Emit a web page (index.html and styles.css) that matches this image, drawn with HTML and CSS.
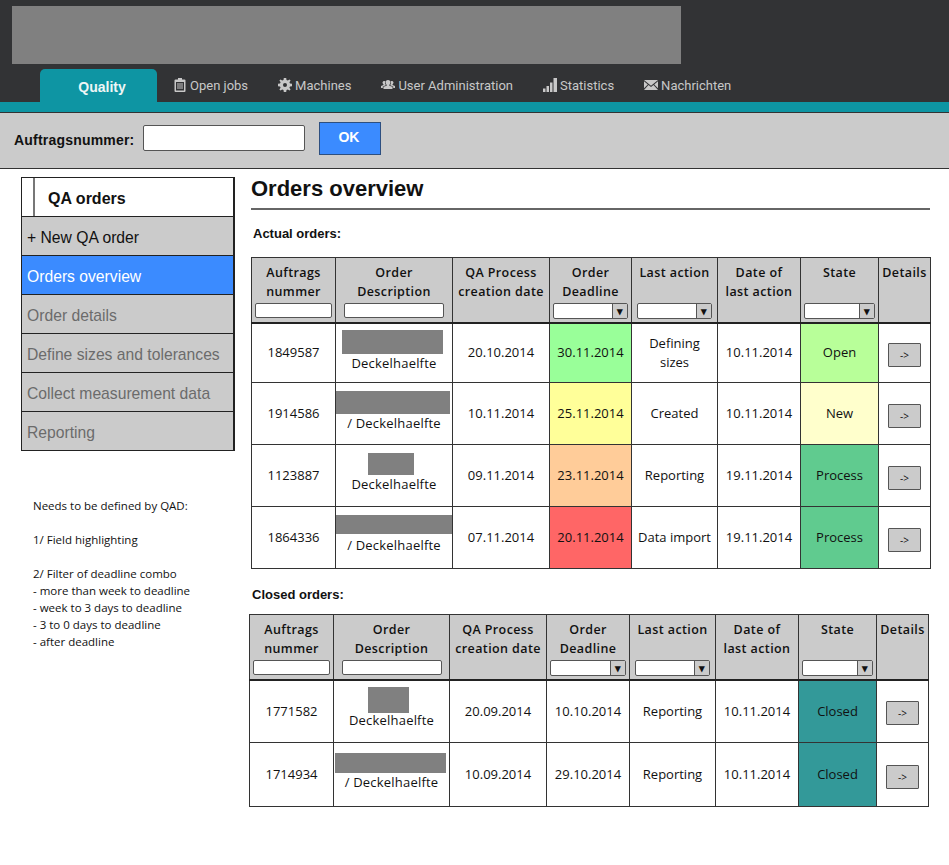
FILE: index.html
```html
<!DOCTYPE html>
<html lang="en">
<head>
    <meta charset="UTF-8">
    <meta name="viewport" content="width=device-width, initial-scale=1.0">
    <title>Orders overview</title>
    <link rel="stylesheet" href="styles.css">
</head>
<body>
    <header class="topbar">
        <div class="logo"></div>
        <nav class="nav">
            <a class="tab">Quality</a>
            <a class="nav-item">
                <svg class="icon" viewBox="0 0 14 14"><path fill-rule="evenodd" d="M5 0h4v1.500h2.500a1 1 0 0 1 1 1V13a1 1 0 0 1-1 1h-9a1 1 0 0 1-1-1V2.500a1 1 0 0 1 1-1H5zM3 4v8.500h8V4zM4 5.500h6v1H4zM4 7.500h6v1H4zM4 9.500h6v1H4z"/></svg>
                Open jobs
            </a>
            <a class="nav-item">
                <svg class="icon" viewBox="0 0 14 14"><path fill-rule="evenodd" d="M5.800 0h2.400l.3 2 1.300.6L11.500 1.400l1.100 1.100-1.200 1.700.6 1.300 2 .3v2.400l-2 .3-.6 1.300 1.200 1.700-1.100 1.100-1.700-1.200-1.300.6-.3 2H5.800l-.3-2-1.300-.6-1.700 1.200-1.100-1.100 1.200-1.700-.6-1.300-2-.3V5.800l2-.3.6-1.300-1.200-1.700 1.100-1.100 1.700 1.200 1.300-.6zM7 5a2 2 0 1 0 0 4 2 2 0 0 0 0-4z"/></svg>
                Machines
            </a>
            <a class="nav-item">
                <svg class="icon" viewBox="0 0 14 14"><path d="M7 2a2.400 2.400 0 0 1 2.400 2.500c0 1-.5 1.900-1.100 2.300v.9l3.200 1.100V11H2.500V8.800l3.200-1.100v-.9c-.6-.4-1.100-1.300-1.100-2.300A2.400 2.400 0 0 1 7 2zM3.300 3a1.900 1.900 0 0 1 1 .3 3.200 3.200 0 0 0 .5 3.600v.4L1.800 8.400V10H0V8l2.500-.9v-.7C2 6 1.500 5.300 1.500 4.600 1.500 3.700 2.300 3 3.300 3zM10.700 3c1 0 1.800.7 1.800 1.600 0 .7-.5 1.400-1 1.800v.7L14 8v2h-1.800V8.400l-3-1.100v-.4a3.200 3.200 0 0 0 .5-3.600 1.900 1.900 0 0 1 1-.3z"/></svg>
                User Administration
            </a>
            <a class="nav-item">
                <svg class="icon" viewBox="0 0 14 14"><path d="M0 10.500h2.500V14H0zM3.500 8H6v6H3.500zM7 4.500h2.500V14H7zM10.500 0H14v14h-3.500z"/></svg>
                Statistics
            </a>
            <a class="nav-item">
                <svg class="icon" viewBox="0 0 14 14"><path d="M0 2h14L7 7.800zM0 3.200l3.800 3.200L0 10.300zM14 3.200v7.100l-3.800-3.900zM4.500 7 7 9l2.500-2L14 12H0z"/></svg>
                Nachrichten
            </a>
        </nav>
    </header>
    <div class="stripe"></div>

    <form class="searchbar">
        <label class="search-label" for="orderNo">Auftragsnummer:</label>
        <input class="search-input" type="text" id="orderNo">
        <button class="ok-btn" type="button">OK</button>
    </form>

    <div class="main">
        <aside class="side">
            <div class="menu">
                <div class="menu-title"><span class="menu-title-text">QA orders</span></div>
                <a class="menu-item">+ New QA order</a>
                <a class="menu-item active">Orders overview</a>
                <a class="menu-item off">Order details</a>
                <a class="menu-item off">Define sizes and tolerances</a>
                <a class="menu-item off">Collect measurement data</a>
                <a class="menu-item off">Reporting</a>
            </div>
            <div class="notes">
                <p>Needs to be defined by QAD:</p>
                <p>1/ Field highlighting</p>
                <p>2/ Filter of deadline combo<br>- more than week to deadline<br>- week to 3 days to deadline<br>- 3 to 0 days to deadline<br>- after deadline</p>
            </div>
        </aside>

        <section class="content">
            <h1 class="page-title">Orders overview</h1>

            <h2 class="table-title">Actual orders:</h2>
            <table class="orders">
                <thead>
                    <tr>
                        <th class="c-no"><div class="th-label">Auftrags<br>nummer</div><input class="filter" type="text"></th>
                        <th class="c-desc"><div class="th-label">Order<br>Description</div><input class="filter filter-desc" type="text"></th>
                        <th class="c-created"><div class="th-label">QA Process<br>creation date</div></th>
                        <th class="c-deadline"><div class="th-label">Order<br>Deadline</div><div class="combo"><span class="combo-arrow">▾</span></div></th>
                        <th class="c-action"><div class="th-label">Last action</div><div class="combo combo-action"><span class="combo-arrow">▾</span></div></th>
                        <th class="c-date"><div class="th-label">Date of<br>last action</div></th>
                        <th class="c-state"><div class="th-label">State</div><div class="combo"><span class="combo-arrow">▾</span></div></th>
                        <th class="c-details"><div class="th-label">Details</div></th>
                    </tr>
                </thead>
                <tbody>
                    <tr class="row-a">
                        <td>1849587</td>
                        <td class="desc"><div class="redact r-101"></div>Deckelhaelfte</td>
                        <td>20.10.2014</td>
                        <td class="bg-green">30.11.2014</td>
                        <td>Defining<br>sizes</td>
                        <td>10.11.2014</td>
                        <td class="bg-open">Open</td>
                        <td><button class="go" type="button">-&gt;</button></td>
                    </tr>
                    <tr class="row-b">
                        <td>1914586</td>
                        <td class="desc"><div class="redact r-114"></div>/ Deckelhaelfte</td>
                        <td>10.11.2014</td>
                        <td class="bg-yellow">25.11.2014</td>
                        <td>Created</td>
                        <td>10.11.2014</td>
                        <td class="bg-new">New</td>
                        <td><button class="go" type="button">-&gt;</button></td>
                    </tr>
                    <tr class="row-b">
                        <td>1123887</td>
                        <td class="desc"><div class="redact r-46"></div>Deckelhaelfte</td>
                        <td>09.11.2014</td>
                        <td class="bg-orange">23.11.2014</td>
                        <td>Reporting</td>
                        <td>19.11.2014</td>
                        <td class="bg-process">Process</td>
                        <td><button class="go" type="button">-&gt;</button></td>
                    </tr>
                    <tr class="row-b">
                        <td>1864336</td>
                        <td class="desc"><div class="redact r-116"></div>/ Deckelhaelfte</td>
                        <td>07.11.2014</td>
                        <td class="bg-red">20.11.2014</td>
                        <td>Data import</td>
                        <td>19.11.2014</td>
                        <td class="bg-process">Process</td>
                        <td><button class="go" type="button">-&gt;</button></td>
                    </tr>
                </tbody>
            </table>

            <h2 class="table-title closed-title">Closed orders:</h2>
            <table class="orders closed">
                <thead>
                    <tr>
                        <th class="c-no"><div class="th-label">Auftrags<br>nummer</div><input class="filter" type="text"></th>
                        <th class="c-desc"><div class="th-label">Order<br>Description</div><input class="filter filter-desc" type="text"></th>
                        <th class="c-created"><div class="th-label">QA Process<br>creation date</div></th>
                        <th class="c-deadline"><div class="th-label">Order<br>Deadline</div><div class="combo"><span class="combo-arrow">▾</span></div></th>
                        <th class="c-action"><div class="th-label">Last action</div><div class="combo combo-action"><span class="combo-arrow">▾</span></div></th>
                        <th class="c-date"><div class="th-label">Date of<br>last action</div></th>
                        <th class="c-state"><div class="th-label">State</div><div class="combo"><span class="combo-arrow">▾</span></div></th>
                        <th class="c-details"><div class="th-label">Details</div></th>
                    </tr>
                </thead>
                <tbody>
                    <tr class="row-c">
                        <td>1771582</td>
                        <td class="desc"><div class="redact r-41"></div>Deckelhaelfte</td>
                        <td>20.09.2014</td>
                        <td>10.10.2014</td>
                        <td>Reporting</td>
                        <td>10.11.2014</td>
                        <td class="bg-closed">Closed</td>
                        <td><button class="go" type="button">-&gt;</button></td>
                    </tr>
                    <tr class="row-d">
                        <td>1714934</td>
                        <td class="desc"><div class="redact r-111"></div>/ Deckelhaelfte</td>
                        <td>10.09.2014</td>
                        <td>29.10.2014</td>
                        <td>Reporting</td>
                        <td>10.11.2014</td>
                        <td class="bg-closed">Closed</td>
                        <td><button class="go" type="button">-&gt;</button></td>
                    </tr>
                </tbody>
            </table>
        </section>
    </div>
</body>
</html>
```

FILE: styles.css
```css
* {
    box-sizing: border-box;
}
body {
    margin: 0;
    background-color: white;
    color: #111;
    font-family: "Liberation Sans", Arial, sans-serif;
}

/* header */
.topbar {
    background-color: #323335;
    padding-top: 6px;
    height: 102px;
}
.logo {
    background-color: #808080;
    margin-left: 12px;
    width: 669px;
    height: 58px;
}
.nav {
    display: flex;
    align-items: center;
    gap: 30px;
    margin-top: 5px;
    padding-left: 40px;
    height: 33px;
    font-family: Roboto, sans-serif;
    font-size: 13px;
    color: #c8c8c8;
}
.tab {
    align-self: stretch;
    display: flex;
    align-items: center;
    justify-content: center;
    width: 117px;
    margin-right: -14px;
    padding: 3px 0 0 7px;
    background-color: #0e95a3;
    border-radius: 5px 5px 0 0;
    font-family: "Liberation Sans", sans-serif;
    font-size: 14px;
    font-weight: bold;
    color: #eef6f6;
}
.nav-item {
    display: flex;
    align-items: center;
    gap: 3px;
    padding-bottom: 1px;
}
.icon {
    width: 14px;
    height: 14px;
    fill: #c8c8c8;
}
.stripe {
    height: 10px;
    background-color: #0e95a3;
}

/* search bar */
.searchbar {
    display: flex;
    align-items: center;
    height: 57px;
    padding: 0 0 5px 14px;
    background-color: #cbcbcb;
    border-top: 1px solid #333;
    border-bottom: 1px solid #333;
}
.search-label {
    font-size: 14px;
    font-weight: bold;
    letter-spacing: 0.2px;
    color: #111;
    margin-top: 3px;
}
.search-input {
    width: 162px;
    height: 26px;
    margin-left: 9px;
    background-color: white;
    border: 1px solid #555;
    border-radius: 2px;
}
.ok-btn {
    width: 62px;
    height: 33px;
    margin-left: 14px;
    padding: 0 3px 2px 0;
    background-color: #3b8bff;
    border: 1px solid #2d4f80;
    color: white;
    font-family: "Liberation Sans", sans-serif;
    font-size: 14px;
    font-weight: bold;
}

/* layout */
.main {
    display: flex;
    align-items: flex-start;
    padding: 8px 0 0 21px;
}
.side {
    width: 214px;
}
.content {
    width: 679px;
    margin-left: 16px;
}

/* left menu */
.menu {
    border: 1px solid #222;
    border-right-width: 2px;
}
.menu-title {
    height: 38px;
    margin-left: 11px;
    padding: 12px 0 0 13px;
    border-left: 2px solid #777;
    font-size: 16px;
    font-weight: bold;
}
.menu-item {
    display: flex;
    align-items: center;
    height: 39px;
    padding: 3px 0 0 5px;
    background-color: #cbcbcb;
    border-top: 1px solid #222;
    font-size: 15.700px;
    color: #111;
}
.menu-item.active {
    background-color: #3b8bff;
    color: white;
}
.menu-item.off {
    color: #6b6b6b;
}
.notes {
    margin: 46px 0 0 12px;
    font-family: "Open Sans", sans-serif;
    font-size: 11.500px;
    line-height: 17px;
    color: #111;
}
.notes p {
    margin: 0 0 17px;
}

/* titles */
.page-title {
    margin: 0;
    height: 33px;
    border-bottom: 2px solid #666;
    font-size: 22px;
    line-height: 24px;
    font-weight: bold;
    color: #111;
}
.table-title {
    margin: 14px 0 14px 2px;
    font-size: 13px;
    line-height: 19px;
    font-weight: bold;
}
.closed-title {
    margin: 16px 0 10px 1px;
}

/* tables */
.orders {
    width: 679px;
    table-layout: fixed;
    border-collapse: collapse;
    border: 1px solid #222;
    font-family: "Open Sans", sans-serif;
    font-size: 13px;
    line-height: 19px;
    color: #111;
}
.closed {
    margin-left: -2px;
}
.orders th {
    height: 65px;
    padding: 5px 3px 0;
    vertical-align: top;
    background-color: #cbcbcb;
    border: 1px solid #333;
    border-bottom: 2px solid #222;
    font-size: 12.500px;
    font-weight: 600;
    letter-spacing: 0.4px;
}
.orders td {
    padding: 0;
    text-align: center;
    vertical-align: middle;
    border: 1px solid #333;
}
.orders td.desc {
    vertical-align: top;
    line-height: 18px;
    letter-spacing: 0.2px;
}
.c-no { width: 84px; }
.c-desc { width: 117px; }
.c-created { width: 97px; }
.c-deadline { width: 82px; }
.c-action { width: 86px; }
.c-date { width: 83px; }
.c-state { width: 78px; }
.c-details { width: 52px; }
.closed .c-desc { width: 116px; }
.closed .c-deadline { width: 83px; }
.row-a { height: 60px; }
.row-b { height: 62px; }
.row-c { height: 63px; }
.row-d { height: 64px; }

.th-label {
    height: 38px;
    line-height: 19px;
    margin-bottom: 2px;
    white-space: nowrap;
}
.filter {
    display: block;
    width: 100%;
    height: 15px;
    padding: 0;
    background-color: white;
    border: 1px solid #555;
    border-radius: 2px;
}
.filter-desc {
    width: 100px;
    margin: 0 auto;
}
.combo {
    display: flex;
    justify-content: flex-end;
    height: 16px;
    background-color: white;
    border: 1px solid #555;
    border-radius: 2px;
}
.combo-action {
    margin: 0 2px;
}
.combo-arrow {
    width: 15px;
    background-color: #cbcbcb;
    border-left: 1px solid #555;
    font-size: 11px;
    line-height: 13px;
    text-align: center;
    letter-spacing: 0;
}

/* blanked out part names, each sits a little differently in its cell */
.redact {
    background-color: #808080;
}
.r-101 { width: 101px; height: 24px; margin: 6px 0 0 6px; }
.r-114 { width: 114px; height: 23px; margin: 8px 0 0 0; }
.r-46 { width: 46px; height: 22px; margin: 8px 0 0 32px; }
.r-116 { width: 116px; height: 19px; margin: 8px 0 2px 0; }
.r-41 { width: 41px; height: 26px; margin: 6px 0 -2px 34px; }
.r-111 { width: 111px; height: 20px; margin: 10px 0 0 1px; }

.bg-green { background-color: #99ff99; }
.bg-yellow { background-color: #ffff99; }
.bg-orange { background-color: #ffcc99; }
.bg-red { background-color: #ff6666; }
.bg-open { background-color: #b8ff99; }
.bg-new { background-color: #ffffcc; }
.bg-process { background-color: #60cb8f; }
.bg-closed { background-color: #339999; }

.go {
    width: 33px;
    height: 24px;
    margin-top: 4px;
    padding: 0;
    background-color: #cbcbcb;
    border: 1px solid #555;
    border-radius: 1px;
    font-family: "Open Sans", sans-serif;
    font-size: 10px;
    color: #111;
    vertical-align: middle;
}
```
